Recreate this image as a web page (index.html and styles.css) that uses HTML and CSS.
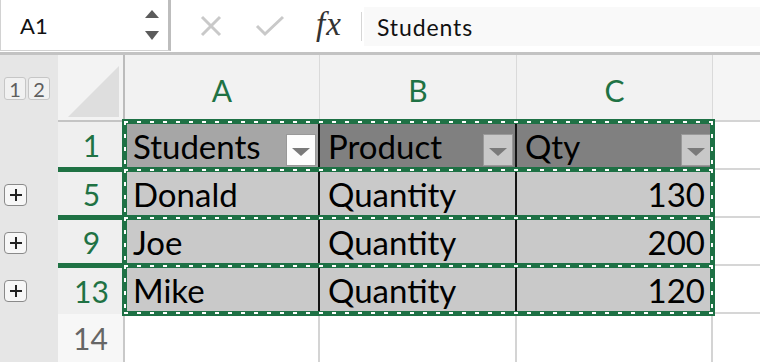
FILE: index.html
```html
<!DOCTYPE html>
<html>
<head>
<meta charset="utf-8">
<link rel="stylesheet" href="styles.css">
</head>
<body>
<div class="app">
  <div class="fbar">
    <div class="namebox">
      <span class="ref">A1</span>
      <svg class="spin" width="16" height="32" viewBox="0 0 16 32">
        <polygon points="1,9 15,9 8,1" fill="#5b5b5b"/>
        <polygon points="1,22 15,22 8,31" fill="#5b5b5b"/>
      </svg>
    </div>
    <svg class="icon-x" width="22" height="22" viewBox="0 0 22 22">
      <path d="M2 2 L20 20 M20 2 L2 20" stroke="#c9c9c9" stroke-width="3" fill="none"/>
    </svg>
    <svg class="icon-check" width="30" height="22" viewBox="0 0 30 22">
      <path d="M2 11 L10 19 L28 2" stroke="#c9c9c9" stroke-width="3" fill="none"/>
    </svg>
    <span class="fx">fx</span>
    <span class="sep"></span>
    <div class="input">Students</div>
  </div>

  <div class="sheet">
    <div class="row head">
      <div class="ol ol-top"><span class="lv">1</span><span class="lv">2</span></div>
      <div class="corner">
        <svg width="65" height="65" viewBox="0 0 65 65"><polygon points="10,62 61,62 61,11" fill="#dedede"/></svg>
      </div>
      <div class="cols">
        <div class="ch">A</div>
        <div class="ch">B</div>
        <div class="ch">C</div>
      </div>
      <div class="ch chd"></div>
    </div>

    <div class="row">
      <div class="ol"></div>
      <div class="rh below">1</div>
      <div class="band">
        <div class="c hd active sepr"><span>Students</span><span class="fb fb-w"><i></i></span></div>
        <div class="c hd sepr"><span>Product</span><span class="fb"><i></i></span></div>
        <div class="c hd"><span>Qty</span><span class="fb"><i></i></span></div>
      </div>
      <div class="d"></div>
    </div>

    <div class="row">
      <div class="ol"><span class="plus"><svg width="12" height="12" viewBox="0 0 12 12"><path d="M0 6 H12 M6 0 V12" stroke="#222" stroke-width="2"/></svg></span></div>
      <div class="rh above below">5</div>
      <div class="band">
        <div class="c sepr">Donald</div>
        <div class="c sepr">Quantity</div>
        <div class="c num">130</div>
      </div>
      <div class="d"></div>
    </div>

    <div class="row">
      <div class="ol"><span class="plus"><svg width="12" height="12" viewBox="0 0 12 12"><path d="M0 6 H12 M6 0 V12" stroke="#222" stroke-width="2"/></svg></span></div>
      <div class="rh above below">9</div>
      <div class="band">
        <div class="c sepr">Joe</div>
        <div class="c sepr">Quantity</div>
        <div class="c num">200</div>
      </div>
      <div class="d"></div>
    </div>

    <div class="row">
      <div class="ol"><span class="plus"><svg width="12" height="12" viewBox="0 0 12 12"><path d="M0 6 H12 M6 0 V12" stroke="#222" stroke-width="2"/></svg></span></div>
      <div class="rh above">13</div>
      <div class="band">
        <div class="c sepr">Mike</div>
        <div class="c sepr">Quantity</div>
        <div class="c num">120</div>
      </div>
      <div class="d"></div>
    </div>

    <div class="row last">
      <div class="ol"></div>
      <div class="rh plain">14</div>
      <div class="empty">
        <div class="e"></div>
        <div class="e"></div>
        <div class="e"></div>
      </div>
      <div class="d dl"></div>
    </div>
  </div>
</div>
</body>
</html>
```

FILE: styles.css
```css
* { box-sizing: border-box; margin: 0; padding: 0; }
html, body { width: 760px; height: 362px; overflow: hidden; background: #fff; }
body { font-family: Lato, "Noto Sans", sans-serif; color: #000; }

.app { display: flex; flex-direction: column; height: 362px; }

/* formula bar */
.fbar {
  height: 55px;
  flex: none;
  display: flex;
  align-items: center;
  border-bottom: 3px solid #c3c3c3;
  background: #fff;
}
.namebox {
  align-self: flex-start;
  width: 171px;
  height: 51px;
  border-left: 1px solid #d2d2d2;
  border-bottom: 1px solid #d2d2d2;
  border-right: 3px solid #bdbdbd;
  display: flex;
  align-items: center;
  justify-content: space-between;
  padding: 0 8px 0 19px;
}
.ref { font-size: 22px; color: #111; }
.spin { display: block; margin-top: -1px; }
.icon-x { margin-left: 29px; flex: none; }
.icon-check { margin-left: 33px; flex: none; }
.fx {
  margin-left: 31px;
  width: 30px;
  font-family: "Liberation Serif", "DejaVu Serif", serif;
  font-style: italic;
  font-size: 33px;
  letter-spacing: 1px;
  color: #333;
  line-height: 1;
  margin-top: -4px;
}
.sep { width: 1px; height: 29px; background: #d6d6d6; margin-left: 15px; }
.input {
  flex: 1;
  align-self: flex-start;
  margin-top: 7px;
  margin-left: 2px;
  height: 39px;
  background: #f9f9f9;
  display: flex;
  align-items: center;
  padding-left: 13px;
  font-size: 23px;
  letter-spacing: 0.9px;
  color: #111;
}

/* sheet */
.sheet { flex: 1; display: flex; flex-direction: column; }
.row { display: flex; height: 48px; flex: none; }
.row.head { height: 67px; }
.row.last { flex: 1; }

.ol {
  width: 58px;
  flex: none;
  background: #e6e6e6;
  display: flex;
  align-items: center;
  padding-left: 4px;
}
.ol-top { gap: 2px; }
.lv {
  width: 22px;
  height: 23px;
  border: 1px solid #c6c6c6;
  border-radius: 3px;
  background: #f1f1f1;
  color: #5e5e5e;
  font-size: 20px;
  display: flex;
  align-items: center;
  justify-content: center;
}
.plus {
  width: 23px;
  height: 22px;
  margin-top: 2px;
  border: 1.5px solid #8a8a8a;
  border-radius: 4px;
  background: #f7f7f7;
  display: flex;
  align-items: center;
  justify-content: center;
}
.plus svg { display: block; }

.corner {
  width: 67px;
  flex: none;
  background: #f3f3f3;
  border-right: 2px solid #bcbcbc;
  border-bottom: 2px solid #c4c4c4;
}
.corner svg { display: block; }

.cols, .band, .empty {
  width: 588px;
  flex: none;
  display: grid;
  grid-template-columns: 195px 197px 196px;
}
.band { position: relative; }

.ch {
  background: #f2f2f2;
  color: #1f7244;
  font-size: 30px;
  display: flex;
  align-items: center;
  justify-content: center;
  border-right: 1px solid #dadada;
  border-bottom: 2px solid #1f7244;
  padding-top: 4px;
}
.chd { flex: 1; background: #f5f5f5; border-bottom: 2px solid #d4d4d4; border-right: none; }

.rh {
  width: 67px;
  flex: none;
  background: #efefef;
  color: #1f7244;
  font-size: 30px;
  display: flex;
  align-items: center;
  justify-content: center;
}
.rh.above { border-top: 2px solid #1f7244; }
.rh.below { border-bottom: 3px solid #1f7244; }
.rh.plain {
  background: #f7f7f7;
  color: #666;
  border-right: 2px solid #c9c9c9;
}

.c {
  background: #c9c9c9;
  font-size: 33px;
  display: flex;
  align-items: center;
  padding: 0 8px;
  white-space: nowrap;
}
.c.num { justify-content: flex-end; padding-right: 8px; }
.c.sepr { border-right: 2px solid #141414; }
.c.hd {
  background: #808080;
  justify-content: space-between;
  padding-right: 2px;
}
.c.hd.active { background: #a6a6a6; }

.fb {
  align-self: flex-end;
  margin-bottom: 4px;
  width: 30px;
  height: 32px;
  flex: none;
  background: #c8c8c8;
  border: 1px solid #999;
  display: flex;
  align-items: center;
  justify-content: center;
  padding-top: 3px;
}
.fb-w { background: #fdfdfd; }
.fb i {
  display: block;
  width: 0;
  height: 0;
  border-left: 9px solid transparent;
  border-right: 9px solid transparent;
  border-top: 8px solid #7a7a7a;
}

.d { flex: 1; background: #fff; border-bottom: 2px solid #d6d6d6; }
.d.dl { border-bottom: none; }
.e { background: #fff; border-right: 2px solid #d4d4d4; }

/* marching-ants copy border, drawn over each copied row */
.band::before,
.band::after {
  content: "";
  position: absolute;
  z-index: 2;
  pointer-events: none;
}
.band::before {
  top: -3px; right: -2px; bottom: -2px; left: -3px;
  border: 5px solid #1e7145;
}
.band::after {
  top: -1px; right: 0; bottom: 0; left: -1px;
  background:
    repeating-linear-gradient(to right, #fff 0 4px, transparent 4px 13px) top left / 100% 2px no-repeat,
    repeating-linear-gradient(to right, #fff 0 4px, transparent 4px 13px) bottom left / 100% 2px no-repeat,
    repeating-linear-gradient(to bottom, #fff 0 4px, transparent 4px 13px) top left / 2px 100% no-repeat,
    repeating-linear-gradient(to bottom, #fff 0 4px, transparent 4px 13px) top right / 2px 100% no-repeat;
}
```
